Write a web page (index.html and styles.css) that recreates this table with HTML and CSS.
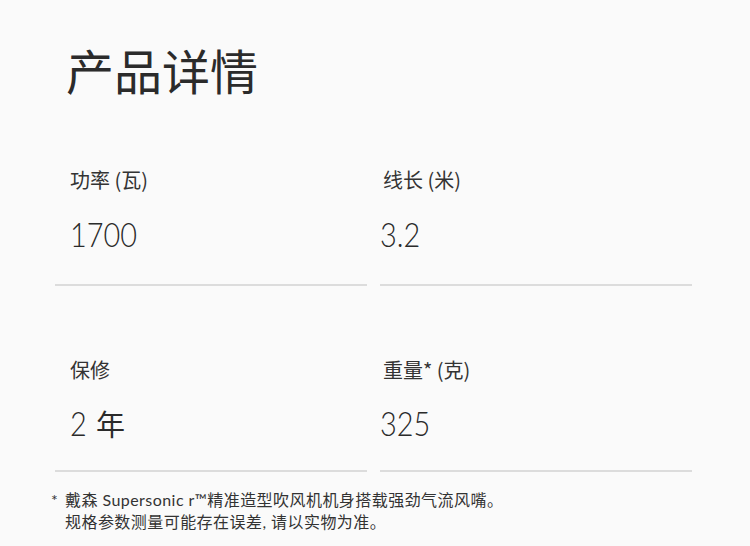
FILE: index.html
```html
<!DOCTYPE html>
<html lang="zh-CN">
<head>
<meta charset="utf-8">
<title>产品详情</title>
<link rel="stylesheet" href="styles.css">
</head>
<body>
<main class="page">
  <h1 class="title">产品详情</h1>
  <section class="specs">
    <div class="cell cell-left row-a">
      <div class="label">功率 (瓦)</div>
      <div class="value"><span class="num">1700</span></div>
    </div>
    <div class="cell cell-right row-a">
      <div class="label">线长 (米)</div>
      <div class="value"><span class="num">3.2</span></div>
    </div>
    <div class="cell cell-left row-b">
      <div class="label">保修</div>
      <div class="value"><span class="num">2</span> <span class="unit">年</span></div>
    </div>
    <div class="cell cell-right row-b">
      <div class="label">重量* (克)</div>
      <div class="value"><span class="num">325</span></div>
    </div>
  </section>
  <div class="note">
    <span class="star">*</span>
    <p class="note-text">戴森 Supersonic r™精准造型吹风机机身搭载强劲气流风嘴。<br>规格参数测量可能存在误差, 请以实物为准。</p>
  </div>
</main>
</body>
</html>
```

FILE: styles.css
```css
html, body {
  margin: 0;
  padding: 0;
  background: #fafafa;
}

body {
  font-family: "Lato", "Noto Sans CJK SC", sans-serif;
  color: #333;
}

.page {
  width: 637px;
  padding: 0 0 0 55px;
}

.title {
  margin: 0;
  padding: 39px 0 0 11px;
  font-family: "Noto Sans CJK SC", sans-serif;
  font-size: 48px;
  line-height: 60px;
  font-weight: 400;
  color: #2b2b2b;
}

.specs {
  display: grid;
  grid-template-columns: 312px 312px;
  column-gap: 13px;
  margin-top: 67px;
}

.cell {
  border-bottom: 2px solid #dcdcdc;
}

.cell-left {
  padding-left: 15px;
}

.cell-right {
  padding-left: 3px;
}

.row-a {
  padding-bottom: 30px;
}

.row-b {
  margin-top: 70px;
  padding-bottom: 27px;
}

.label {
  font-family: "Noto Sans CJK SC", sans-serif;
  font-size: 20px;
  line-height: 28px;
  color: #333;
}

.value {
  margin-top: 20px;
  font-family: "Lato", "Noto Sans CJK SC", sans-serif;
  font-weight: 300;
  font-size: 34px;
  line-height: 40px;
  color: #2a2a2a;
}

.row-b .value {
  margin-top: 19px;
}

.num {
  display: inline-block;
  transform: scaleX(0.85);
  transform-origin: left center;
}

.unit {
  font-family: "Noto Sans CJK SC", sans-serif;
  font-weight: 400;
  font-size: 29px;
  margin-left: -3px;
}

.cell-right .value {
  margin-left: -3px;
}

.note {
  display: flex;
  margin-top: 17px;
  margin-left: -4px;
  font-size: 16px;
  line-height: 22px;
  letter-spacing: 0.45px;
  color: #333;
}

.star {
  width: 14px;
  flex: none;
  font-family: "Lato", sans-serif;
}

.note-text {
  margin: 0;
  font-family: "Lato", "Noto Sans CJK SC", sans-serif;
}
```
